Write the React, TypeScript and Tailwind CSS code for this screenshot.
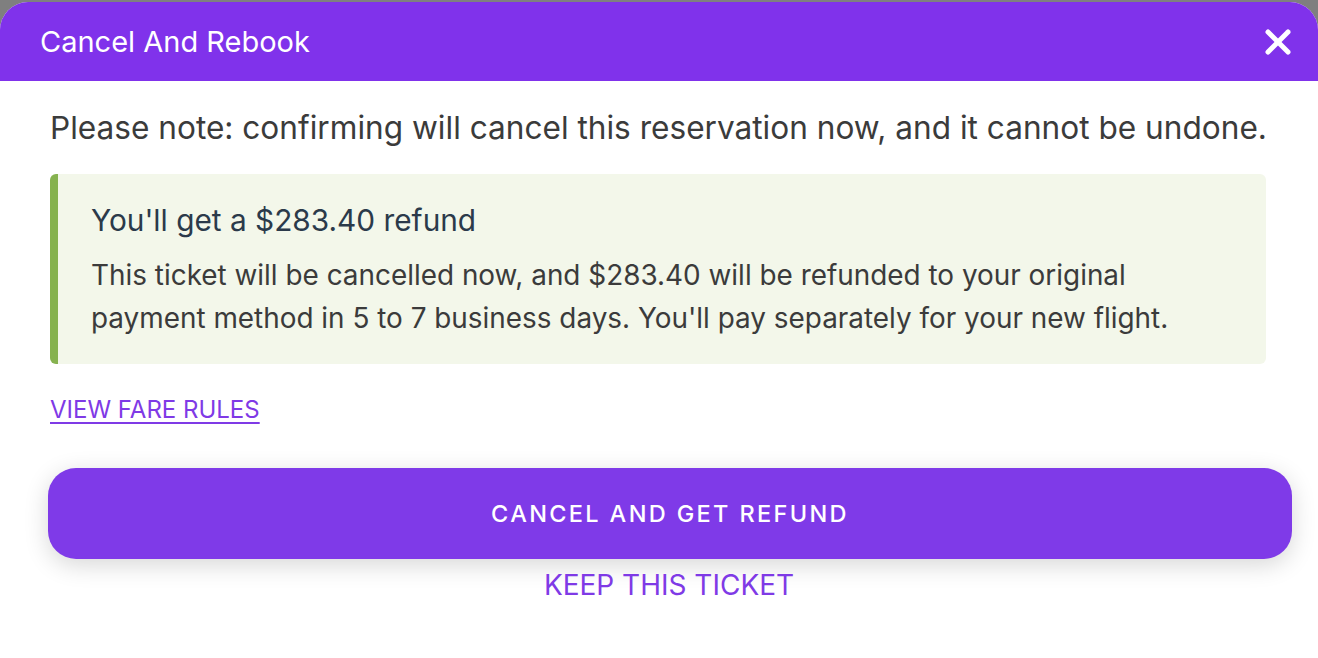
import React from 'react'
import { X } from 'lucide-react'

export default function App() {
  return (
    <div className="min-h-screen bg-[#7f7f7f] pt-[2px]" style={{ fontFamily: 'Inter, "Noto Sans", sans-serif' }}>
      <div className="h-[656px] overflow-hidden rounded-t-[28px] bg-white">
        <div className="flex h-[79px] items-center justify-between bg-[#8032eb] pl-10 pr-[20px]">
          <h2 className="text-[29px] font-normal text-white">Cancel And Rebook</h2>
          <button className="text-white">
            <X size={40} strokeWidth={3} />
          </button>
        </div>

        <div className="pl-[50px] pr-[26px]">
          <p className="mt-[27px] whitespace-nowrap text-[31.6px] leading-[40px] text-[#3b3b3b]">
            Please note: confirming will cancel this reservation now, and it cannot be undone.
          </p>

          <div className="mt-[26px] mr-[26px] rounded-md border-l-8 border-[#86b24f] bg-[#f3f7ea] pb-[24px] pl-[33px] pt-[26px]">
            <h3 className="text-[29.8px] leading-[40px] text-[#2b3a4a]">You'll get a $283.40 refund</h3>
            <p className="mt-[14px] text-[27.9px] leading-[43px] text-[#3b3b3b]">
              This ticket will be cancelled now, and $283.40 will be refunded to your original
              <br />
              payment method in 5 to 7 business days. You'll pay separately for your new flight.
            </p>
          </div>

          <a href="#" className="mt-[30px] inline-block text-[24px] leading-[32px] text-[#7f3ae6] underline underline-offset-4">
            VIEW FARE RULES
          </a>

          <div className="-ml-[2px] mt-[42px]">
            <button className="flex h-[91px] w-full items-center justify-center rounded-[28px] bg-[#7f3ae8] text-[23.5px] font-medium tracking-[0.1em] text-white shadow-[0_6px_24px_rgba(0,0,0,0.16)]">
              CANCEL AND GET REFUND
            </button>
          </div>

          <div className="mt-[8px] flex justify-center pr-[4px]">
            <button className="text-[28px] leading-[36px] text-[#7f3ae6]">KEEP THIS TICKET</button>
          </div>
        </div>
      </div>
    </div>
  )
}
